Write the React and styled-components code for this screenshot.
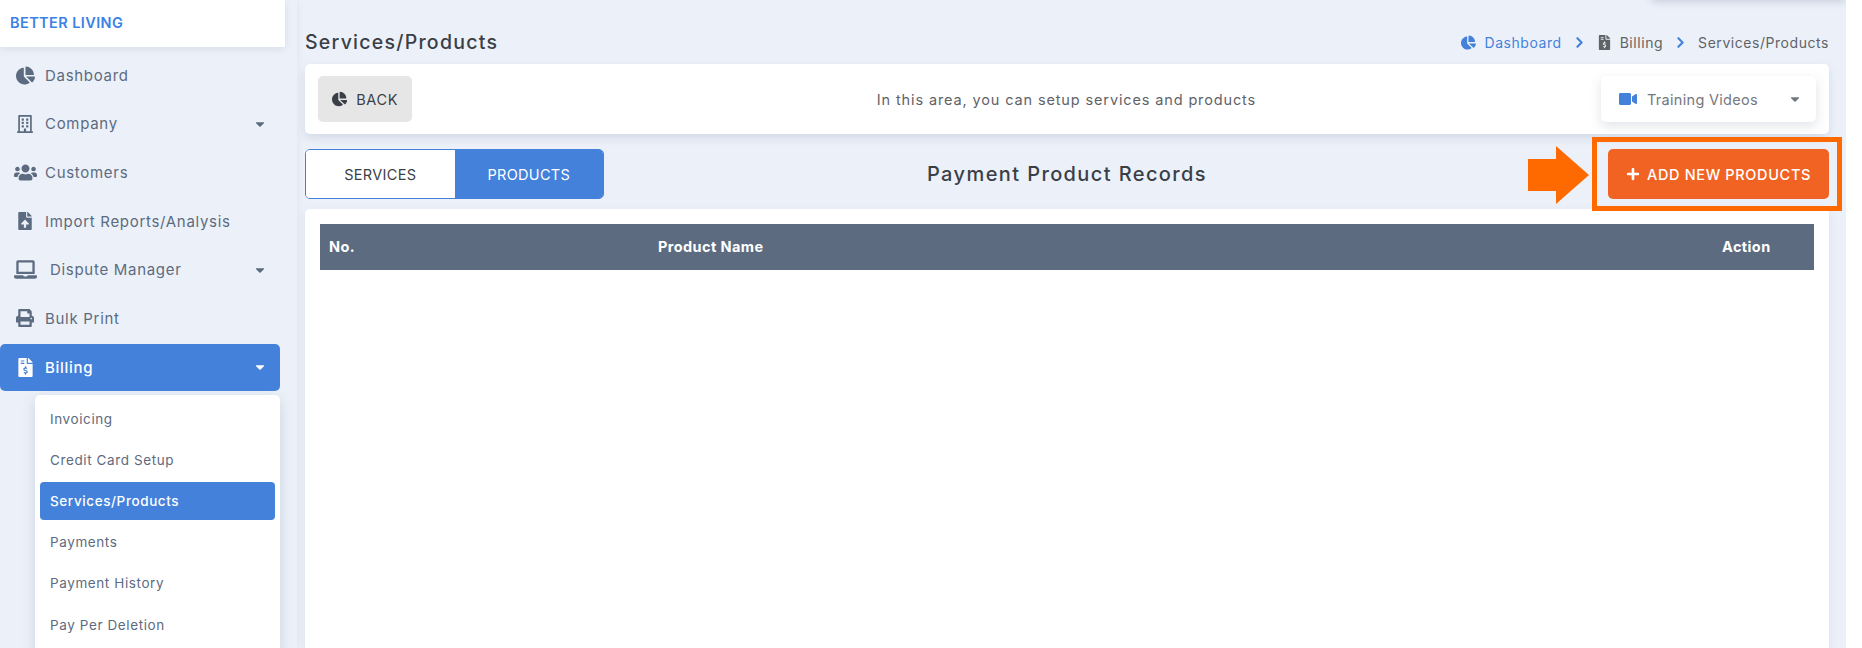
import styled, { createGlobalStyle } from "styled-components";
import {
  FaCaretDown,
  FaChartPie,
  FaFileInvoiceDollar,
  FaFileUpload,
  FaLaptop,
  FaPlus,
  FaPrint,
  FaRegBuilding,
  FaUsers,
  FaVideo,
} from "react-icons/fa";
import { FiChevronRight } from "react-icons/fi";

const GlobalStyle = createGlobalStyle`
  html, body {
    margin: 0;
    height: 648px;
    overflow: hidden;
    background: #fff;
    font-family: Inter, "Open Sans", "Liberation Sans", sans-serif;
  }
  * { box-sizing: border-box; }
`;

const Page = styled.div`
  position: relative;
  display: flex;
  width: 1846px;
  height: 648px;
  overflow: hidden;
  background: #ecf1f9;
`;

// bottom edge of the user menu, cut off by the top of the picture
const UserMenuEdge = styled.div`
  position: absolute;
  top: -40px;
  right: 0;
  width: 195px;
  height: 40px;
  box-shadow: 0 2px 8px rgba(60, 80, 110, 0.2);
`;

const Sidebar = styled.aside`
  flex: 0 0 297px;
  height: 648px;
  box-shadow: 2px 0 6px rgba(60, 80, 110, 0.05);
`;

const Logo = styled.div`
  width: 285px;
  height: 47px;
  padding: 14px 0 0 10px;
  background: #fff;
  box-shadow: 0 2px 8px rgba(60, 80, 110, 0.12);
  color: #3b82e6;
  font-size: 14.5px;
  font-weight: 600;
  letter-spacing: 0.4px;
  line-height: 17px;
  white-space: nowrap;
`;

const Nav = styled.nav`
  display: flex;
  flex-direction: column;
  padding-top: 4px;
  width: 280px;
`;

const NavItem = styled.div`
  display: flex;
  align-items: center;
  height: ${(p) => (p.$active ? "47px" : "48.6px")};
  margin-top: ${(p) => (p.$active ? "1.4px" : "0")};
  padding: 0 13px 0 10px;
  border-radius: 5px;
  background: ${(p) => (p.$active ? "#4381db" : "transparent")};
  color: ${(p) => (p.$active ? "#fff" : "#5d6b80")};
  font-size: 15px;
  font-weight: ${(p) => (p.$active ? 500 : 400)};
  letter-spacing: 0.7px;
  white-space: nowrap;
`;

const NavIcon = styled.span`
  display: flex;
  justify-content: center;
  flex: 0 0 30px;
  margin-right: ${(p) => p.$gap || 5}px;
  font-size: ${(p) => p.$size || 18}px;
`;

const NavLabel = styled.span`
  flex: 1;
`;

const Caret = styled(FaCaretDown)`
  font-size: 14px;
`;

const SubMenu = styled.div`
  display: flex;
  flex-direction: column;
  margin: 4px 0 0 35px;
  width: 245px;
  height: 260px;
  padding: 3px 5px;
  border-radius: 5px 5px 0 0;
  background: #fff;
  box-shadow: 0 4px 14px rgba(60, 80, 110, 0.18);
`;

const SubItem = styled.div`
  display: flex;
  align-items: center;
  flex: 0 0 ${(p) => (p.$active ? "38px" : "41.3px")};
  margin: ${(p) => (p.$active ? "1.5px 0" : "0")};
  padding-left: 10px;
  border-radius: 4px;
  background: ${(p) => (p.$active ? "#4381db" : "transparent")};
  color: ${(p) => (p.$active ? "#fff" : "#5d6b80")};
  font-size: 13.5px;
  font-weight: ${(p) => (p.$active ? 500 : 400)};
  letter-spacing: 0.6px;
`;

const Main = styled.main`
  flex: 1;
  min-width: 0;
  padding: 0 17px 0 8px;
`;

const TitleRow = styled.div`
  display: flex;
  align-items: center;
  justify-content: space-between;
  height: 64px;
  padding-top: 20px;
`;

const Title = styled.h1`
  margin: 0;
  color: #3a3f47;
  font-size: 19.5px;
  font-weight: 500;
  letter-spacing: 1.25px;
`;

const Crumbs = styled.div`
  display: flex;
  align-items: center;
  color: #5f6368;
  font-size: 14px;
  letter-spacing: 0.55px;
`;

const Crumb = styled.span`
  display: flex;
  align-items: center;
  gap: 8px;
  color: ${(p) => (p.$link ? "#4381db" : "#5f6368")};
  svg { font-size: 15px; }
`;

const CrumbSep = styled(FiChevronRight)`
  margin: 0 9px;
  color: #4381db;
  font-size: 17px;
  stroke-width: 3;
`;

const InfoCard = styled.section`
  display: flex;
  align-items: center;
  justify-content: space-between;
  height: 70px;
  padding: 0 13px;
  border-radius: 5px;
  background: #fff;
  box-shadow: 0 4px 10px rgba(60, 80, 110, 0.14);
`;

const BackButton = styled.button`
  display: flex;
  align-items: center;
  gap: 9px;
  width: 94px;
  height: 46px;
  padding: 0 14px;
  border: 0;
  border-radius: 5px;
  background: #e6e6e6;
  color: #3a3f47;
  font: 400 14.5px Inter, sans-serif;
  letter-spacing: 0.6px;
`;

const InfoText = styled.p`
  flex: 1;
  margin: 0 0 0 120px;
  color: #5f6368;
  font-size: 14.5px;
  letter-spacing: 0.87px;
  text-align: center;
`;

const VideoDrop = styled.div`
  display: flex;
  align-items: center;
  width: 215px;
  height: 46px;
  padding: 0 14px 0 18px;
  border-radius: 5px;
  background: #fff;
  box-shadow: 0 4px 12px rgba(60, 80, 110, 0.16);
  color: #73787f;
  font-size: 14.5px;
  letter-spacing: 0.3px;
  svg:first-child { margin-right: 10px; color: #4381db; font-size: 18px; }
  span { flex: 1; }
`;

const ActionRow = styled.div`
  position: relative;
  display: flex;
  align-items: center;
  justify-content: space-between;
  height: 50px;
  margin-top: 15px;
`;

const Tabs = styled.div`
  display: flex;
  width: 299px;
  height: 50px;
  border: 1px solid #4381db;
  border-radius: 5px;
  overflow: hidden;
`;

const Tab = styled.div`
  display: flex;
  flex: 1;
  align-items: center;
  justify-content: center;
  background: ${(p) => (p.$active ? "#4381db" : "#fff")};
  color: ${(p) => (p.$active ? "#fff" : "#3a3f47")};
  font-size: 14.5px;
  font-weight: 400;
  letter-spacing: 0.3px;
`;

const RecordsTitle = styled.h2`
  margin: 0;
  color: #3a3f47;
  font-size: 20px;
  font-weight: 500;
  letter-spacing: 1.4px;
  position: relative;
  left: -39px;
`;

const AddButton = styled.button`
  display: flex;
  align-items: center;
  justify-content: center;
  gap: 7px;
  width: 221px;
  height: 50px;
  border: 0;
  border-radius: 5px;
  background: #f16323;
  color: #fff;
  font: 500 14.5px Inter, sans-serif;
  letter-spacing: 0.65px;
`;

const HighlightFrame = styled.div`
  position: absolute;
  top: -12px;
  right: -13px;
  width: 250px;
  height: 74px;
  border: 5px solid #ff6a00;
  pointer-events: none;
`;

const Arrow = styled.svg`
  position: absolute;
  top: -3px;
  right: 240px;
  width: 61px;
  height: 58px;
`;

const TableCard = styled.section`
  height: 440px;
  margin-top: 10px;
  padding: 15px;
  border-radius: 5px 5px 0 0;
  background: #fff;
  box-shadow: 0 3px 10px rgba(60, 80, 110, 0.1);
`;

const TableHead = styled.div`
  display: grid;
  grid-template-columns: 329px 1fr 92px;
  align-items: center;
  height: 46px;
  padding: 0 0 1px 9px;
  background: #5d6b80;
  color: #fff;
  font-size: 14.5px;
  font-weight: 700;
  letter-spacing: 0.4px;
`;

const navItems = [
  { label: "Dashboard", icon: <FaChartPie />, size: 19 },
  { label: "Company", icon: <FaRegBuilding />, caret: true },
  { label: "Customers", icon: <FaUsers />, size: 23 },
  { label: "Import Reports/Analysis", icon: <FaFileUpload /> },
  { label: "Dispute Manager", icon: <FaLaptop />, size: 23, gap: 10, caret: true },
  { label: "Bulk Print", icon: <FaPrint /> },
];

const subItems = ["Invoicing", "Credit Card Setup", "Services/Products", "Payments", "Payment History", "Pay Per Deletion"];

export default function App() {
  return (
    <>
      <GlobalStyle />
      <Page>
        <UserMenuEdge />
        <Sidebar>
          <Logo>BETTER LIVING</Logo>
          <Nav>
            {navItems.map((item) => (
              <NavItem key={item.label}>
                <NavIcon $gap={item.gap} $size={item.size}>{item.icon}</NavIcon>
                <NavLabel>{item.label}</NavLabel>
                {item.caret && <Caret />}
              </NavItem>
            ))}
            <NavItem $active>
              <NavIcon $size={19}><FaFileInvoiceDollar /></NavIcon>
              <NavLabel>Billing</NavLabel>
              <Caret />
            </NavItem>
          </Nav>
          <SubMenu>
            {subItems.map((item) => (
              <SubItem key={item} $active={item === "Services/Products"}>{item}</SubItem>
            ))}
          </SubMenu>
        </Sidebar>
        <Main>
          <TitleRow>
            <Title>Services/Products</Title>
            <Crumbs>
              <Crumb $link><FaChartPie />Dashboard</Crumb>
              <CrumbSep />
              <Crumb><FaFileInvoiceDollar />Billing</Crumb>
              <CrumbSep />
              <Crumb>Services/Products</Crumb>
            </Crumbs>
          </TitleRow>
          <InfoCard>
            <BackButton><FaChartPie size={16} />BACK</BackButton>
            <InfoText>In this area, you can setup services and products</InfoText>
            <VideoDrop>
              <FaVideo />
              <span>Training Videos</span>
              <Caret />
            </VideoDrop>
          </InfoCard>
          <ActionRow>
            <Tabs>
              <Tab>SERVICES</Tab>
              <Tab $active>PRODUCTS</Tab>
            </Tabs>
            <RecordsTitle>Payment Product Records</RecordsTitle>
            <AddButton><FaPlus size={14} />ADD NEW PRODUCTS</AddButton>
            <Arrow viewBox="0 0 61 58">
              <path d="M0 13H28V0L61 29 28 58V45H0Z" fill="#ff6a00" />
            </Arrow>
            <HighlightFrame />
          </ActionRow>
          <TableCard>
            <TableHead>
              <span>No.</span>
              <span>Product Name</span>
              <span>Action</span>
            </TableHead>
          </TableCard>
        </Main>
      </Page>
    </>
  );
}
